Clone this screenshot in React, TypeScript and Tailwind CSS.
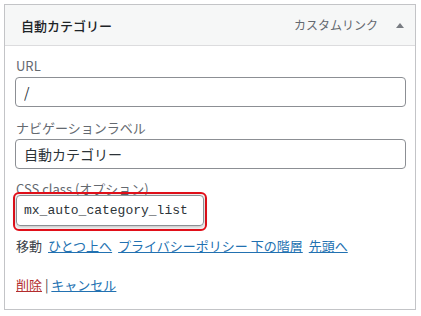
import React from 'react';

const font = { fontFamily: '"Noto Sans CJK JP", "Noto Sans", sans-serif' };

export default function App() {
  return (
    <div className="w-[421px] h-[316px] bg-white pt-[4px] pl-[4px]" style={font}>
      <div className="w-[412px] h-[306px] border border-[#c3c4c7] bg-white">
        {/* ヘッダー */}
        <div className="h-[41px] flex items-center bg-[#f6f7f7] border-b border-[#dcdcde] pl-[16px] pr-[11px]">
          <span className="text-[13px] font-medium text-[#1d2327] leading-none">自動カテゴリー</span>
          <span className="ml-auto text-[12px] text-[#646970] leading-none">カスタムリンク</span>
          <span className="ml-[18px] w-0 h-0 border-l-[4px] border-r-[4px] border-b-[5px] border-l-transparent border-r-transparent border-b-[#787c82]" />
        </div>

        <div className="pl-[10px] pr-[9px] pt-[12px]">
          {/* URL */}
          <label className="block text-[13px] leading-[16px] text-[#646970] ml-[1px]">URL</label>
          <input
            readOnly
            value="/"
            className="mt-[3px] w-[391px] h-[30px] px-[8px] rounded-[4px] border border-[#8c8f94] text-[14px] text-[#2c3338] outline-none"
            style={font}
          />

          {/* ナビゲーションラベル */}
          <label className="block mt-[13px] text-[13px] leading-[16px] text-[#646970] ml-[1px]">ナビゲーションラベル</label>
          <input
            readOnly
            value="自動カテゴリー"
            className="mt-[3px] w-[391px] h-[30px] px-[8px] rounded-[4px] border border-[#8c8f94] text-[14px] text-[#2c3338] outline-none"
            style={font}
          />

          {/* CSS class */}
          <label className="block mt-[12px] text-[13px] leading-[16px] text-[#646970] ml-[1px]">CSS class (オプション)</label>
          <div className="relative mt-[-5px] -ml-[2px] w-[194px] pt-[1px] pb-[3px] px-[1px] border-2 border-[#e5101a] rounded-[6px]">
            <input
              readOnly
              value="mx_auto_category_list"
              className="w-[188px] h-[31px] px-[7px] rounded-[4px] border border-[#8c8f94] text-[13px] text-[#2c3338] outline-none shadow-[0_1px_4px_rgba(0,0,0,0.3)]"
              style={{ fontFamily: '"Liberation Mono", monospace' }}
            />
          </div>

          {/* 移動 */}
          <div className="mt-[5px] flex items-center gap-[6px] text-[13px] leading-[20px] ml-[1px]">
            <span className="text-[#3c434a]">移動</span>
            <a className="text-[#2271b1] underline">ひとつ上へ</a>
            <a className="text-[#2271b1] underline">プライバシーポリシー 下の階層</a>
            <a className="text-[#2271b1] underline">先頭へ</a>
          </div>

          {/* 削除 / キャンセル */}
          <div className="mt-[19px] text-[13px] leading-[20px] ml-[1px] text-[#3c434a]">
            <a className="text-[#b32d2e] underline">削除</a>
            <span> | </span>
            <a className="text-[#2271b1] underline">キャンセル</a>
          </div>
        </div>
      </div>
    </div>
  );
}
